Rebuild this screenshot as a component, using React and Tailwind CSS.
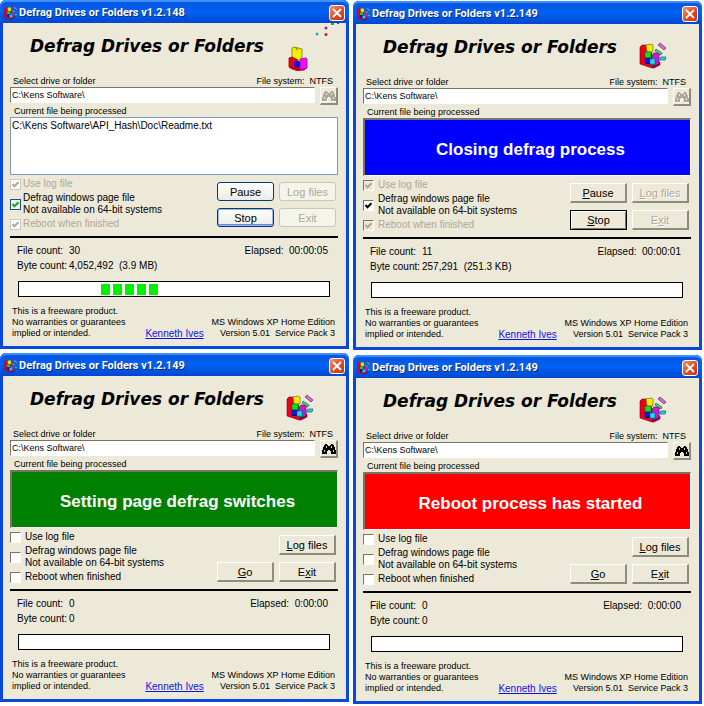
import React from "react";

const APP = "Defrag Drives or Folders";

function Block({ x, y, w, h, fill, side }) {
  return (
    <g>
      <path d={`M${x + w} ${y}l1 1v${h}h-${w}l-1 -1z`} fill={side} />
      <rect x={x} y={y} width={w} height={h} fill={fill} stroke={side} strokeWidth="0.5" />
    </g>
  );
}

function CubeShapes() {
  return (
    <g>
      <path d="M0 3l2 -2h5v14l7 4l6 -1v3l-6 3l-2 0l-12 -4z" fill="#e8001c" stroke="#7a0010" strokeWidth="0.6" />
      <path d="M12 22l7 -3v2l-6 3z" fill="#7a0a40" />
      <path d="M6 1l5 -1l2 1v7h-6z" fill="#f4ea10" stroke="#75700a" strokeWidth="0.7" />
      <path d="M12 11l2 -2h6l-1 3v8l-6 2z" fill="#c21ed0" stroke="#5c0a70" strokeWidth="0.7" />
      <Block x={5} y={8} w={6} h={6} fill="#12e018" side="#075c10" />
      <Block x={5} y={14} w={5} h={5} fill="#1414f0" side="#080870" />
      <Block x={10} y={15} w={5} h={5} fill="#2ad6e8" side="#0a6e8c" />
      <path d="M18 1l2 -2l6 5l-2 2z" fill="#d06cdc" stroke="#5c2670" strokeWidth="0.7" />
      <path d="M15 7l1 -2l6 4l-1 2z" fill="#4cd070" stroke="#1c6a34" strokeWidth="0.7" />
      <path d="M20 14l1 -1h5l-1 3h-5z" fill="#28d4dc" stroke="#0a5e68" strokeWidth="0.7" />
    </g>
  );
}

function HeaderArt({ flying }) {
  return (
    <svg viewBox="0 0 60 52" className="h-[52px] w-[60px] shrink-0" aria-hidden="true">
      {flying ? (
        <g>
          <path d="M8 25l2 -1l8 2v14l-10 -2z" fill="#f6ee00" stroke="#807a00" strokeWidth="0.8" />
          <path d="M11 24.500l2 1v2" fill="none" stroke="#6a6600" strokeWidth="0.8" />
          <path d="M5 35l3 -1l6 3v10l-9 -3z" fill="#ee0010" stroke="#8a0010" strokeWidth="0.8" />
          <path d="M5 44l9 -1l9 2l-3 2.500l-7 0.500l-6 -2z" fill="#c00018" />
          <path d="M16 36l6 -1l1 1v9l-7 2z" fill="#ee10ee" stroke="#80108a" strokeWidth="0.8" />
          <rect x="10" y="38" width="6" height="6" rx="1.500" fill="#1010e0" />
          <circle cx="33" cy="11" r="1.500" fill="#2cb0b4" />
          <circle cx="42" cy="5" r="1.500" fill="#84308c" />
          <circle cx="42" cy="11.500" r="1.500" fill="#c01c1c" />
          <rect x="47" y="0" width="3" height="2" fill="#30a030" />
          <rect x="53" y="0" width="2" height="1" fill="#444" />
        </g>
      ) : (
        <g transform="translate(3 20)">
          <CubeShapes />
        </g>
      )}
    </svg>
  );
}

function TitleIcon() {
  return (
    <svg viewBox="-1 -2 28 27" className="size-3.5 shrink-0" aria-hidden="true">
      <CubeShapes />
    </svg>
  );
}

function Binoculars({ disabled }) {
  const shape =
    "M3 2h2v1h1v1h2v-1h1v-1h2v1h1v2h1v3h1v4h-5v-3h-1v-1h-2v1h-1v3h-5v-4h1v-3h1v-2h1z";
  return (
    <svg viewBox="0 0 14 14" className="size-3.5" shapeRendering="crispEdges" aria-hidden="true">
      {disabled && <path d={shape} fill="#fff" transform="translate(1 1)" />}
      <path d={shape} fill={disabled ? "#aca899" : "#000"} />
      <path
        d="M4 4h1v2h-1zM2 8h1v2h-1zM9 4h1v2h-1zM11 8h1v2h-1z"
        fill={disabled ? "#ece9d8" : "#c8c8c8"}
      />
    </svg>
  );
}

function TitleBar({ title }) {
  return (
    <header className="flex h-[23px] items-center gap-px rounded-t-md bg-linear-to-b from-[#0a50d8] via-[#0062f4] to-[#0047d0] pt-0.5 pr-1 pl-1 shadow-[inset_0_2px_1px_#3c94ff]">
      <TitleIcon />
      <h2 className="grow font-[Roboto,'Noto_Sans',sans-serif] text-[11px] leading-4 font-bold whitespace-nowrap text-white [text-shadow:1px_1px_0_#0a2a80]">
        {title}
      </h2>
      <button
        type="button"
        aria-label="Close"
        className="flex size-4 items-center justify-center rounded-[3px] border border-white bg-linear-to-br from-[#f09070] via-[#e0502c] to-[#c03410]"
      >
        <svg viewBox="0 0 10 10" className="size-2.5" aria-hidden="true">
          <path d="M1 1l8 8M9 1l-8 8" stroke="#fff" strokeWidth="1.800" />
        </svg>
      </button>
    </header>
  );
}

function Check({ id, luna, checked, disabled, children }) {
  let box = luna
    ? "border-[#1c5180] bg-[#f4f4ee]"
    : "border-t-[#777468] border-l-[#777468] border-r-white border-b-white bg-white";
  if (disabled) {
    box = luna
      ? "border-[#cac8bb] bg-white"
      : "border-t-[#777468] border-l-[#777468] border-r-white border-b-white bg-[#ece9d8]";
  }
  const mark = disabled ? "#aca899" : luna ? "#21a121" : "#000";
  return (
    <div className={luna ? "flex items-center gap-0.5" : "flex items-center gap-1"}>
      <span className="grid place-items-center">
        <input
          id={id}
          type="checkbox"
          defaultChecked={checked}
          disabled={disabled}
          className={`peer col-start-1 row-start-1 size-[11px] appearance-none border ${box}`}
        />
        <svg
          viewBox="0 0 9 9"
          className="pointer-events-none invisible col-start-1 row-start-1 size-[9px] peer-checked:visible"
          aria-hidden="true"
        >
          <path d="M1.500 4l2 2.200l4 -4" fill="none" stroke={mark} strokeWidth="2" />
        </svg>
      </span>
      <label
        htmlFor={id}
        className={
          disabled
            ? "text-[10px] leading-3 whitespace-nowrap text-[#aca899]"
            : "text-[10px] leading-3 whitespace-nowrap"
        }
      >
        {children}
      </label>
    </div>
  );
}

function PushButton({ luna, focused, disabled, name, hot }) {
  let look;
  if (luna) {
    look = "h-[19px] rounded-[3px] border bg-linear-to-b from-white to-[#ecebe5] ";
    if (disabled) look = "h-[19px] rounded-[3px] border border-[#c9c7ba] bg-[#f5f4ea] text-[#aca899]";
    else if (focused) look += "border-[#003c74] shadow-[inset_0_0_0_1px_#98b8ea,inset_0_-2px_0_#6982ee]";
    else look += "border-[#003c74]";
  } else if (focused) {
    look = "h-5 border border-black shadow-[inset_1px_1px_0_#fff,inset_-1px_-1px_0_#777468]";
  } else {
    look =
      "h-5 border-t border-l border-r-2 border-b-2 border-t-white border-l-white border-r-[#8f8c7e] border-b-[#8f8c7e]";
    if (disabled) look += " text-[#aca899] [text-shadow:1px_1px_0_#fff]";
  }
  const at = luna || !hot ? -1 : name.indexOf(hot);
  return (
    <button type="button" disabled={disabled} className={`w-full text-[11px] leading-3 ${look}`}>
      {at < 0 ? (
        name
      ) : (
        <>
          {name.slice(0, at)}
          <u>{hot}</u>
          {name.slice(at + 1)}
        </>
      )}
    </button>
  );
}

function DefragWindow({ id, version, luna, running, file, banner, color, files, bytes, elapsed, blocks }) {
  return (
    <section className="rounded-t-md border-x-[3px] border-b-[3px] border-[#0a48dc] bg-[#0a48dc]">
      <div className="-mx-[3px]">
        <TitleBar title={`${APP} ${version}`} />
      </div>
      <div className="bg-[#ece9d8] pr-2 pb-[7px] pl-[7px]">
        <div className="-mr-1.5 flex">
          <h1 className="grow pt-2.5 pl-5 font-['DejaVu_Sans',sans-serif] text-[17px] leading-[26px] font-bold whitespace-nowrap italic">
            {APP}
          </h1>
          <HeaderArt flying={luna} />
        </div>
        <div className="flex justify-between pr-[5px] pl-[3px] text-[9px] leading-3">
          <label htmlFor={`${id}-path`}>Select drive or folder</label>
          <span className="whitespace-pre">File system:  NTFS</span>
        </div>
        <div className="flex h-[19px] items-start gap-[5px]">
          <input
            id={`${id}-path`}
            type="text"
            defaultValue="C:\Kens Software\"
            className="h-4 min-w-0 grow border border-t-[#777468] border-r-white border-b-white border-l-[#777468] bg-white px-px text-[9px] leading-3"
          />
          <button
            type="button"
            aria-label="Browse"
            disabled={running}
            className="flex size-[18px] items-center justify-center border-t border-r-2 border-b-2 border-l border-t-white border-r-[#8f8c7e] border-b-[#8f8c7e] border-l-white"
          >
            <Binoculars disabled={running} />
          </button>
        </div>
        <label htmlFor={`${id}-file`} className="block pl-1 text-[9px] leading-[11px]">
          Current file being processed
        </label>
        {banner ? (
          <output
            id={`${id}-file`}
            className={`flex h-[58px] items-center justify-center border-t-2 border-r border-b border-l-2 border-t-[#777468] border-r-white border-b-white border-l-[#777468] pt-1 pl-1.5 text-[17px] font-bold text-white ${color}`}
          >
            {banner}
          </output>
        ) : (
          <textarea
            id={`${id}-file`}
            readOnly
            value={file}
            className="block h-[58px] w-full resize-none border border-[#7f9db9] bg-white px-px py-0.5 text-[10px] leading-3"
          />
        )}
        <div className="flex h-[61px] justify-between pr-0.5">
          <div className="flex flex-col gap-0.5 pt-[3px]">
            <Check id={`${id}-log`} luna={luna} checked={running} disabled={running}>
              Use log file
            </Check>
            <Check id={`${id}-page`} luna={luna} checked={running}>
              Defrag windows page file
              <br />
              Not available on 64-bit systems
            </Check>
            <Check id={`${id}-reboot`} luna={luna} checked={running} disabled={running}>
              Reboot when finished
            </Check>
          </div>
          <div className="grid w-[119px] grid-cols-2 content-start gap-x-[5px] gap-y-[7px] pt-[7px]">
            {running ? <PushButton luna={luna} name="Pause" hot="P" /> : <span />}
            <PushButton luna={luna} name="Log files" hot="L" disabled={running} />
            {running ? (
              <PushButton luna={luna} name="Stop" hot="S" focused />
            ) : (
              <PushButton name="Go" hot="G" />
            )}
            <PushButton luna={luna} name="Exit" hot="x" disabled={running} />
          </div>
        </div>
        <hr className="border-t-2 border-black" />
        <div className="flex justify-between pt-[5px] pr-2.5 pl-[7px] text-[10px] leading-[15px]">
          <dl className="grid grid-cols-[52px_auto] whitespace-pre">
            <dt>File count:</dt>
            <dd>{files}</dd>
            <dt>Byte count:</dt>
            <dd>{bytes}</dd>
          </dl>
          <p className="whitespace-pre">Elapsed:  {elapsed}</p>
        </div>
        <div className="pt-2 pr-2 pl-2">
          <div
            role="progressbar"
            aria-label="Progress"
            className={
              blocks
                ? "flex h-4 items-center gap-[3px] border border-black bg-white pl-[82px]"
                : "h-4 border border-black bg-white"
            }
          >
            {Array.from({ length: blocks || 0 }, (_, i) => (
              <span key={i} className="h-[11px] w-[9px] bg-[#00f000]" />
            ))}
          </div>
        </div>
        <footer className="flex items-end justify-between pt-[9px] pr-[3px] pl-0.5 text-[9px] leading-[11px]">
          <p>
            This is a freeware product.
            <br />
            No warranties or guarantees
            <br />
            implied or intended.
          </p>
          <a href="#author" className="pl-3 text-[10px] text-[#1010e8] underline">
            Kenneth Ives
          </a>
          <p className="text-right whitespace-pre">
            MS Windows XP Home Edition
            <br />
            Version 5.01  Service Pack 3
          </p>
        </footer>
      </div>
    </section>
  );
}

export default function App() {
  return (
    <main className="grid grid-cols-2 items-start gap-x-1 bg-white pr-0.5 font-['Liberation_Sans',Arial,sans-serif] text-black">
      <div className="flex flex-col gap-1">
        <DefragWindow
          id="a"
          version="v1.2.148"
          luna
          running
          file="C:\Kens Software\API_Hash\Doc\Readme.txt"
          files="30"
          bytes="4,052,492  (3.9 MB)"
          elapsed="00:00:05"
          blocks={5}
        />
        <DefragWindow
          id="c"
          version="v1.2.149"
          banner="Setting page defrag switches"
          color="bg-[#008000]"
          files="0"
          bytes="0"
          elapsed="0:00:00"
        />
      </div>
      <div className="flex flex-col gap-[5px] pt-px">
        <DefragWindow
          id="b"
          version="v1.2.149"
          running
          banner="Closing defrag process"
          color="bg-[#0000ff]"
          files="11"
          bytes="257,291  (251.3 KB)"
          elapsed="00:00:01"
        />
        <DefragWindow
          id="d"
          version="v1.2.149"
          banner="Reboot process has started"
          color="bg-[#ff0000]"
          files="0"
          bytes="0"
          elapsed="0:00:00"
        />
      </div>
    </main>
  );
}
